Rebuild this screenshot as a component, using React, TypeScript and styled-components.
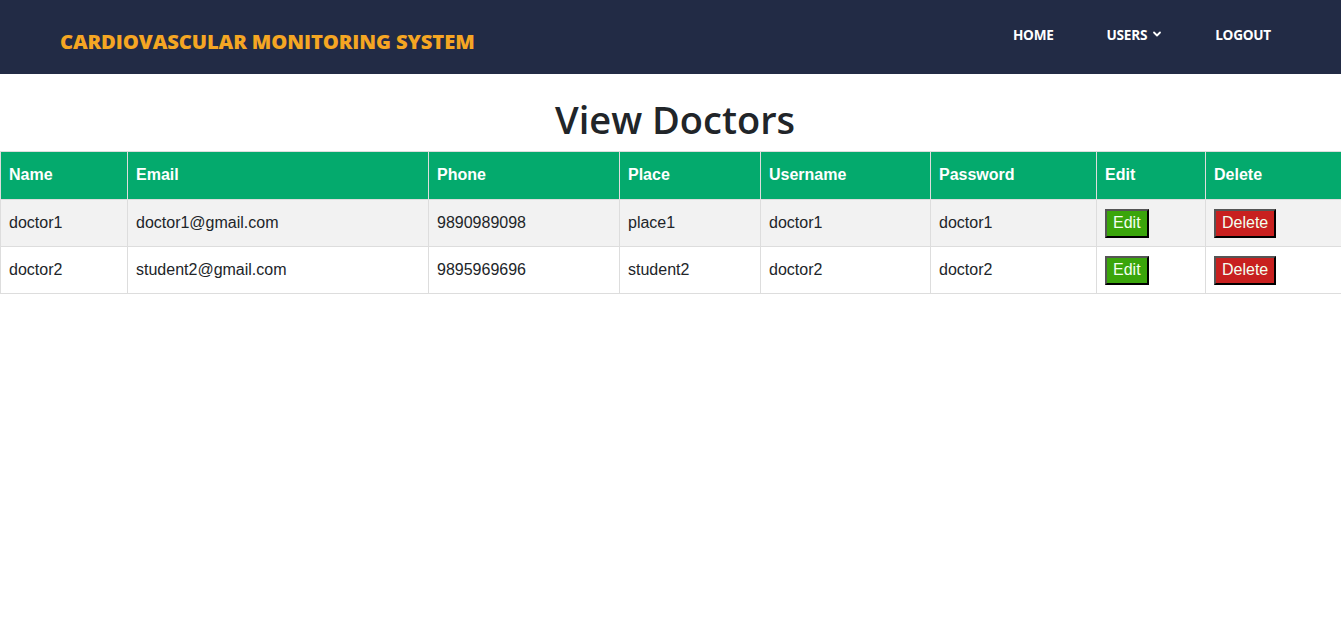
import React from "react";
import styled, { createGlobalStyle } from "styled-components";

const GlobalStyle = createGlobalStyle`
  body {
    margin: 0;
    background: #ffffff;
    font-family: "Open Sans", "Liberation Sans", sans-serif;
  }
`;

type Doctor = {
  name: string;
  email: string;
  phone: string;
  place: string;
  username: string;
  password: string;
};

const doctors: Doctor[] = [
  {
    name: "doctor1",
    email: "doctor1@gmail.com",
    phone: "9890989098",
    place: "place1",
    username: "doctor1",
    password: "doctor1",
  },
  {
    name: "doctor2",
    email: "student2@gmail.com",
    phone: "9895969696",
    place: "student2",
    username: "doctor2",
    password: "doctor2",
  },
];

const columns = [
  { label: "Name", width: 127 },
  { label: "Email", width: 301 },
  { label: "Phone", width: 191 },
  { label: "Place", width: 141 },
  { label: "Username", width: 170 },
  { label: "Password", width: 166 },
  { label: "Edit", width: 109 },
  { label: "Delete", width: 136 },
];

const ChevronDown = () => (
  <svg width="10" height="10" viewBox="0 0 10 10" fill="none">
    <path d="M2 3.5 L5 6.5 L8 3.5" stroke="#ffffff" strokeWidth="1.8" strokeLinecap="round" strokeLinejoin="round" />
  </svg>
);

const App = () => {
  return (
    <>
      <GlobalStyle />
      <NavBar>
        <Brand>CARDIOVASCULAR MONITORING SYSTEM</Brand>
        <NavLinks>
          <NavLink>HOME</NavLink>
          <NavLink>
            USERS <ChevronDown />
          </NavLink>
          <NavLink>LOGOUT</NavLink>
        </NavLinks>
      </NavBar>
      <PageTitle>View Doctors</PageTitle>
      <Table>
        <colgroup>
          {columns.map((c) => (
            <col key={c.label} style={{ width: c.width }} />
          ))}
        </colgroup>
        <thead>
          <tr>
            {columns.map((c) => (
              <HeadCell key={c.label}>{c.label}</HeadCell>
            ))}
          </tr>
        </thead>
        <tbody>
          {doctors.map((d, i) => (
            <Row key={d.name} $striped={i % 2 === 0}>
              <Cell>{d.name}</Cell>
              <Cell>{d.email}</Cell>
              <Cell>{d.phone}</Cell>
              <Cell>{d.place}</Cell>
              <Cell>{d.username}</Cell>
              <Cell>{d.password}</Cell>
              <Cell>
                <ActionButton $color="#3aa50b">Edit</ActionButton>
              </Cell>
              <Cell>
                <ActionButton $color="#c8201f">Delete</ActionButton>
              </Cell>
            </Row>
          ))}
        </tbody>
      </Table>
    </>
  );
};

export default App;

const NavBar = styled.nav`
  height: 74px;
  background: #222b45;
  display: flex;
  align-items: center;
  justify-content: space-between;
  padding: 0 70px 0 60px;
`;

const Brand = styled.div`
  color: #f5a623;
  font-family: "Open Sans", sans-serif;
  font-weight: 800;
  font-size: 20.2px;
  letter-spacing: -0.1px;
  margin-top: 8px;
`;

const NavLinks = styled.div`
  display: flex;
  align-items: center;
  gap: 53px;
  margin-bottom: 6px;
`;

const NavLink = styled.a`
  display: flex;
  align-items: center;
  gap: 5px;
  color: #ffffff;
  font-family: "Open Sans", sans-serif;
  font-weight: 700;
  font-size: 13.6px;
  letter-spacing: -0.25px;
  cursor: pointer;
`;

const PageTitle = styled.h1`
  margin: 22px 0 9px;
  padding-left: 9px;
  text-align: center;
  font-family: "Open Sans", sans-serif;
  font-weight: 600;
  font-size: 38px;
  line-height: 46px;
  color: #212529;
`;

const Table = styled.table`
  width: 100%;
  border-collapse: collapse;
  table-layout: fixed;
  font-family: "Liberation Sans", Arial, sans-serif;
  font-size: 16px;
`;

const HeadCell = styled.th`
  height: 48px;
  box-sizing: border-box;
  padding: 0 8px 1px;
  text-align: left;
  font-weight: 700;
  color: #ffffff;
  background: #04aa6d;
  border: 1px solid #dddddd;
`;

const Row = styled.tr<{ $striped: boolean }>`
  background: ${(p) => (p.$striped ? "#f2f2f2" : "#ffffff")};
`;

const Cell = styled.td`
  height: 47px;
  box-sizing: border-box;
  padding: 0 8px;
  color: #212529;
  border: 1px solid #dddddd;
`;

const ActionButton = styled.button<{ $color: string }>`
  height: 29px;
  padding: 0 6px;
  font-family: "Liberation Sans", Arial, sans-serif;
  font-size: 16px;
  color: #f3fff0;
  background: ${(p) => p.$color};
  border: 2px solid;
  border-color: #555555 #000000 #000000 #555555;
  cursor: pointer;
`;
